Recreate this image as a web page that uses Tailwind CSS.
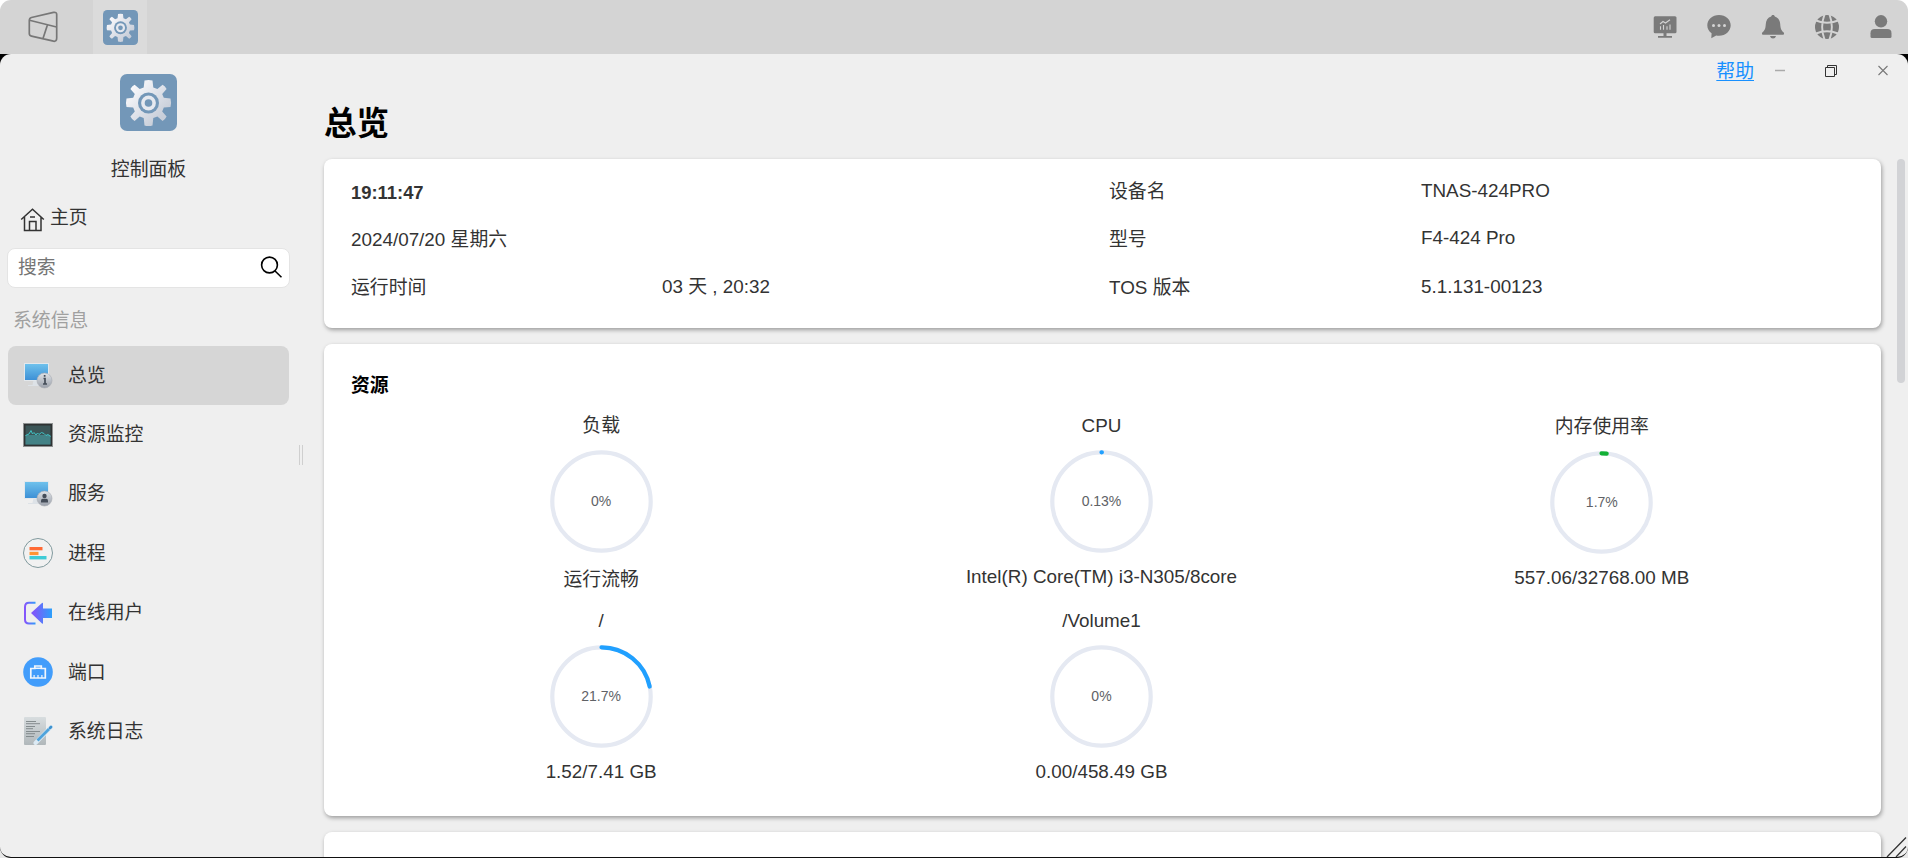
<!DOCTYPE html>
<html lang="zh-CN">
<head>
  <meta charset="UTF-8" />
  <script src="https://cdn.jsdelivr.net/npm/@tailwindcss/browser@4"></script>
  <title>控制面板</title>
</head>
<body class="bg-white h-screen overflow-hidden font-['Liberation_Sans','Noto_Sans_CJK_SC',sans-serif] text-[18.85px] text-[#333]">
  <svg class="absolute h-0 w-0">
    <defs>
      <linearGradient id="gearFill" x1="0" y1="0" x2="1" y2="1">
        <stop offset="0.15" stop-color="#f8f8fb" /><stop offset="0.8" stop-color="#c8ced9" />
      </linearGradient>
      <linearGradient id="screenFill" x1="0" y1="0" x2="0" y2="1">
        <stop offset="0" stop-color="#6ec1ec" /><stop offset="1" stop-color="#3d90d6" />
      </linearGradient>
      <linearGradient id="badgeFill" x1="0" y1="0" x2="0" y2="1">
        <stop offset="0" stop-color="#dfe3e8" /><stop offset="1" stop-color="#9aa0aa" />
      </linearGradient>
      <linearGradient id="purpleFill" gradientUnits="userSpaceOnUse" x1="1" y1="0" x2="29" y2="0">
        <stop offset="0" stop-color="#8c50fb" /><stop offset="0.4" stop-color="#7a5cfa" /><stop offset="1" stop-color="#2ba0fb" />
      </linearGradient>
      <linearGradient id="purpleLine" gradientUnits="userSpaceOnUse" x1="1" y1="0" x2="13" y2="0">
        <stop offset="0" stop-color="#8c50fb" /><stop offset="1" stop-color="#2ba0fb" />
      </linearGradient>
      <linearGradient id="paperFill" x1="0" y1="0" x2="0" y2="1">
        <stop offset="0" stop-color="#d8dddf" /><stop offset="1" stop-color="#b0b7ba" />
      </linearGradient>
      <symbol id="gear" viewBox="0 0 57 57">
        <rect width="57" height="57" rx="7" fill="#7397b8" />
        <path fill="url(#gearFill)" d="M24.5 6.5Q28.5 5.6 32.5 6.5L33.3 13.5L37.4 15L42.6 10.8Q45.2 12.2 46.6 15L42.2 20L43.8 23.8L50.5 24.5Q51.6 28.5 50.5 33L43.8 33.4L42.2 37.4L46.6 42.6Q45.2 45.6 42.6 47L37.4 42.4L33.3 44L32.5 51.5Q28.5 52.5 24.5 51.5L23.7 44L19.7 42.4L14.6 47Q11.8 45.6 10.4 42.6L14.8 37.4L13.2 33.4L6.5 33Q5.5 28.5 6.5 24.5L13.2 23.8L14.8 20L10.4 15Q11.8 12.2 14.6 10.8L19.7 15L23.7 13.5Z" />
        <circle cx="28.5" cy="29" r="10.5" fill="#7397b8" />
        <circle cx="28.5" cy="29" r="7.4" fill="#e6e9f0" />
        <circle cx="28.5" cy="29" r="3.8" fill="#7397b8" />
      </symbol>
      <symbol id="monitor" viewBox="0 0 30 26">
        <path d="M10.5 17h6l1.500 5h3v1H5v-1h4.500z" fill="#dde2e7" />
        <rect x="1" y="0" width="25" height="18" fill="#e3e8ec" />
        <rect x="2" y="1" width="23" height="16" fill="url(#screenFill)" />
        <circle cx="21.500" cy="17.500" r="7.500" fill="url(#badgeFill)" stroke="#a7abb1" stroke-width="0.6" />
      </symbol>
    </defs>
  </svg>

  <div class="flex h-full flex-col">
    <!-- Taskbar -->
    <header class="flex h-[54px] shrink-0 items-center justify-between rounded-t-[11px] bg-[#d4d4d4]">
      <div class="flex h-full items-center">
        <div class="flex h-full w-[93px] items-center">
          <svg class="ml-[27px] h-8 w-8" viewBox="0 0 32 32" fill="none" stroke="#777" stroke-width="1.7" stroke-linejoin="round">
            <path d="M4.500 6.500 26.500 1.400Q29.700.8 29.700 3.500V27Q29.700 30.800 26.500 30.200L4.500 25.200Q2.300 24.700 2.300 22.500V9.500Q2.300 7 4.500 6.500ZM2.500 9.300 29.500 16M20.500 13.800 16 27.600" />
          </svg>
        </div>
        <div class="flex h-full w-[54px] items-center justify-center bg-[#dbdbdb]">
          <svg class="h-[35px] w-[35px]"><use href="#gear" /></svg>
        </div>
      </div>
      <div class="mr-[15px] flex items-center gap-[30px] text-[#7a7a7a]">
        <svg class="h-6 w-6" viewBox="0 0 24 24" fill="currentColor">
          <rect x="0.700" y="1.200" width="22.800" height="17" rx="1.500" />
          <path d="M10.500 18h3v3h5.500v1.700H5V21h5.500z" />
          <path d="M7.500 14.700v-3.500M10.500 14.700V10M14 14.700v-3.500M17 14.700V9.500M7 9l3-2.500 2.500 1.500L17 4.800" fill="none" stroke="#d4d4d4" stroke-width="1.100" />
        </svg>
        <svg class="h-6 w-6" viewBox="0 0 24 24">
          <path fill="currentColor" d="M12 0C5.400 0 .3 4.600.3 10.300c0 3.300 1.600 6.100 4.300 8L4.300 23.200l4.900-2.700c.9.200 1.800.3 2.800.3 6.600 0 11.700-4.700 11.700-10.500S18.600 0 12 0Z" />
          <g fill="#d4d4d4"><circle cx="6.500" cy="10.500" r="1.500" /><circle cx="12" cy="10.500" r="1.500" /><circle cx="17.500" cy="10.500" r="1.500" /></g>
        </svg>
        <svg class="h-6 w-6" viewBox="0 0 24 24" fill="currentColor">
          <path d="M12 0c1.100 0 1.700.6 1.800 1.500 3.500 1 5.200 4 5.400 7.500.3 4.500 1 6.500 3.500 8.500.8.900.2 2.200-1 2.200H2.300c-1.200 0-1.800-1.300-1-2.200 2.500-2 3.200-4 3.500-8.500.2-3.500 1.900-6.500 5.400-7.500C10.300.6 10.900 0 12 0ZM9 21h6c-.5 1.700-1.500 2.500-3 2.500S9.500 22.700 9 21Z" />
        </svg>
        <svg class="h-6 w-6" viewBox="0 0 24 24">
          <circle cx="12" cy="12" r="12" fill="currentColor" />
          <path fill="none" stroke="#d4d4d4" stroke-width="1.900" d="M1 5.500Q12 10 23 5.500M1 18.500Q12 14 23 18.500M9.500-.5Q4.800 12 9.500 24.500M14.500-.5Q19.200 12 14.500 24.500" />
        </svg>
        <svg class="h-6 w-6" viewBox="0 0 24 24" fill="currentColor">
          <circle cx="12" cy="6.300" r="6.200" />
          <path d="M1.500 21.500v-3.300Q1.500 14 5.700 14h12.600q4.200 0 4.200 4.200v3.300q0 1.500-1.500 1.500H3q-1.500 0-1.500-1.500Z" />
        </svg>
      </div>
    </header>

    <!-- Control panel window -->
    <div class="min-h-0 grow bg-linear-to-b from-black from-50% to-[#e8e8e8] to-50%">
      <div class="relative flex h-[804px] overflow-hidden rounded-[11px] border-b border-[#111] bg-[#efefef]">
        <aside class="w-[297px] shrink-0 px-2">
          <div class="flex flex-col items-center pt-5">
            <svg class="h-[57px] w-[57px]"><use href="#gear" /></svg>
            <div class="mt-[25px] leading-7">控制面板</div>
          </div>

          <div class="mt-5 flex h-7 items-center pl-3">
            <svg class="mt-1 h-6 w-[25px]" viewBox="0 0 25 24" fill="none" stroke="#333" stroke-width="1.500">
              <path d="M1.200 11.500 12.500 1.300 23.800 11.500M4.500 9v13.500h16.500V9M9.500 22.500V13.500h6.500v9M10 9h5" />
            </svg>
            <span class="ml-[5px]">主页</span>
          </div>

          <div class="mt-[16px] -ml-px flex h-[40px] w-[283px] items-center justify-between rounded-[8px] border border-[#e4e4e4] bg-white pr-[7px] pl-[10px]">
            <span class="text-[#757575]">搜索</span>
            <svg class="-mt-[2px] h-[22px] w-[22px]" viewBox="0 0 22 22" fill="none" stroke="#000" stroke-width="1.600">
              <circle cx="9.500" cy="9" r="7.900" /><path d="M14.800 14.700 21.500 21.300" />
            </svg>
          </div>

          <div class="mt-[19px] pl-[5px] leading-7 text-[#a0a0a0]">系统信息</div>

          <nav class="mt-[11px] w-[281px]">
            <a class="flex h-[59px] items-center rounded-[8px] bg-[#d6d6d6] pl-[15px]">
              <svg class="mr-4 h-[26px] w-[30px]"><use href="#monitor" /><path d="M20.500 15.500h1.500v5.500M20 21h4M20.800 12.800h1.700" fill="none" stroke="#444c58" stroke-width="1.700" /></svg>
              <span class="-ml-px pt-[2px]">总览</span>
            </a>
            <a class="flex h-[59.3px] items-center pl-[15px]">
              <svg class="mr-4 h-[24px] w-[30px]" viewBox="0 0 30 24">
                <rect width="30" height="24" fill="#8e9292" /><rect x="1" y="1" width="28" height="22" fill="#2f3233" />
                <rect x="2.500" y="2.500" width="25" height="19" fill="#3b5557" /><rect x="2.500" y="12" width="25" height="9.500" fill="#438286" />
                <path d="M2.500 12.500 6 11 8 7.500 9.500 11 11 9.500 13 12 14.500 10 16 11.500 18.500 9.500 21 10.500 23 12.500 25 11.500 27.500 13.500" fill="none" stroke="#3fc3c6" />
              </svg>
              <span class="-ml-px pt-px">资源监控</span>
            </a>
            <a class="flex h-[59.3px] items-center pl-[15px]">
              <svg class="mr-4 h-[26px] w-[30px]"><use href="#monitor" /><circle cx="21.500" cy="15" r="2.200" fill="#444c58" /><path d="M18 21.500v-2q0-1.700 1.700-1.700h3.600q1.700 0 1.700 1.700v2z" fill="#444c58" /></svg>
              <span class="-ml-px pt-px">服务</span>
            </a>
            <a class="flex h-[59.3px] items-center pl-[15px]">
              <svg class="mr-4 h-[30px] w-[30px]" viewBox="0 0 30 30">
                <circle cx="15" cy="15" r="14.500" fill="#f1f1f1" stroke="#80999d" />
                <path d="M6.500 9h13v3.300h-13z" fill="#ff6a35" /><path d="M6.500 13.800h9v3.300h-9z" fill="#ff9432" /><path d="M6.500 18h17v3.400h-17z" fill="#3fcbd6" />
              </svg>
              <span class="-ml-px pt-[2px]">进程</span>
            </a>
            <a class="flex h-[59.3px] items-center pl-[15px]">
              <svg class="mr-4 h-[24px] w-[30px]" viewBox="0 0 30 24">
                <path d="M12.500 1.800H6Q2 1.800 2 6V18.500Q2 22.500 6 22.500H12.500" fill="none" stroke="url(#purpleLine)" stroke-width="2" />
                <path d="M8 12 19 2Q20 1.300 20 2.500V7.500H29V17H20V22Q20 23.200 19 22.500Z" fill="url(#purpleFill)" />
              </svg>
              <span class="-ml-px pt-[2px]">在线用户</span>
            </a>
            <a class="flex h-[59.3px] items-center pl-[15px]">
              <svg class="mr-4 h-[30px] w-[30px]" viewBox="0 0 30 30">
                <circle cx="15" cy="15" r="14.800" fill="#429dfb" />
                <path d="M7.800 11.500h4v-2.500h6.500v2.500h4v9.500H7.800z" fill="none" stroke="#f1f6fc" stroke-width="1.700" />
                <path d="M11 10.500h8V12h-8zM10.500 18h1.200v3h-1.200zM14.400 18h1.200v3h-1.200zM18.300 18h1.200v3h-1.200z" fill="#f1f6fc" />
              </svg>
              <span class="-ml-px pt-[2px]">端口</span>
            </a>
            <a class="flex h-[59.3px] items-center pl-[15px]">
              <svg class="mr-4 h-[28px] w-[30px]" viewBox="0 0 30 28">
                <rect x="1" width="22" height="28" rx="1" fill="url(#paperFill)" />
                <path d="M3 4.500h10M3 6.700h14M3 9.500h9M3 11.700h7M3 14.500h14M3 16.700h9M3 19.500h8" stroke="#7d8487" stroke-width="0.900" />
                <path d="M12.500 26 28 10" stroke="#dceaf4" stroke-width="4" stroke-linecap="round" />
                <path d="M14.500 23.500 26 12" stroke="#4fa3db" stroke-width="2.800" /><path d="M27 11 28 10" stroke="#3f93d0" stroke-width="2.800" stroke-linecap="round" />
              </svg>
              <span class="-ml-px pt-[2px]">系统日志</span>
            </a>
          </nav>
        </aside>

        <!-- Splitter -->
        <div class="mt-[391px] ml-[2px] h-5 w-1 shrink-0 border-x border-[#cfcfcf]"></div>

        <main class="min-w-0 grow pl-[21px]">
          <div class="flex h-[33px] items-center justify-end pr-[19px]">
            <a class="pt-[3px] text-[#1890ff] underline underline-offset-2">帮助</a>
            <svg class="ml-5 h-3 w-3" viewBox="0 0 12 12"><path d="M1 5.500h10" stroke="#aaa" stroke-width="1.500" /></svg>
            <svg class="ml-[39px] h-3 w-3" viewBox="0 0 12 12" fill="none" stroke="#333"><path d="M.5 2.500h9v9h-9zM2.500 2.500v-2h9v9h-2" /></svg>
            <svg class="ml-10 h-3 w-3" viewBox="0 0 12 12"><path d="M1.500 1l9 9M10.500 1l-9 9" stroke="#777" stroke-width="1.100" /></svg>
          </div>
          <h1 class="mt-[12px] h-[60px] text-[32.500px] leading-[50px] font-bold text-black">总览</h1>

          <div class="flex">
            <div class="flex w-[1557px] shrink-0 flex-col gap-4">
              <!-- Device info -->
              <section class="grid h-[169px] grid-cols-[311px_447px_312px_1fr] content-start rounded-lg bg-white pt-[10px] pl-[27px] leading-[47.400px] shadow-[1px_2px_4px_rgba(0,0,0,0.35)]">
                <div class="text-[18.400px] font-bold">19:11:47</div>
                <div></div>
                <div class="-mt-px">设备名</div>
                <div class="-mt-[2px]">TNAS-424PRO</div>
                <div>2024/07/20 星期六</div>
                <div></div>
                <div>型号</div>
                <div class="-mt-[2px]">F4-424 Pro</div>
                <div>运行时间</div>
                <div class="-mt-px">03 天 , 20:32</div>
                <div>TOS 版本</div>
                <div class="-mt-px">5.1.131-00123</div>
              </section>

              <!-- Resources -->
              <section class="h-[472px] rounded-lg bg-white pt-[28px] pr-[29px] pl-[27px] shadow-[1px_2px_4px_rgba(0,0,0,0.35)]">
                <h2 class="leading-7 font-bold text-black">资源</h2>
                <div id="gauges" class="mt-[12px] grid auto-rows-[195px] grid-cols-3"></div>
              </section>

              <section class="h-[60px] shrink-0 rounded-lg bg-white shadow-[1px_2px_4px_rgba(0,0,0,0.35)]"></section>
            </div>
            <div class="ml-4 h-[224px] w-2 rounded-full bg-[#d2d3d6]"></div>
          </div>
        </main>

        <!-- Resize handle -->
        <svg class="absolute right-0 bottom-0 h-[21px] w-[22px]" viewBox="0 0 22 21" fill="none" stroke="#333" stroke-width="1.300">
          <path d="M1 21 20 1.500M10 21 20 10.500" />
        </svg>
      </div>
    </div>
  </div>

  <script>
    const gauges = [
      { name: "负载", percent: 0, note: "运行流畅", color: "#20a0ff", top: "pt-0", gap: "mt-[13px]" },
      { name: "CPU", percent: 0.13, note: "Intel(R) Core(TM) i3-N305/8core", color: "#20a0ff", top: "pt-0", gap: "mt-[10px]" },
      { name: "内存使用率", percent: 1.7, note: "557.06/32768.00 MB", color: "#13b035", top: "pt-px", gap: "mt-[10px]" },
      { name: "/", percent: 21.7, note: "1.52/7.41 GB", color: "#20a0ff", top: "pt-0", gap: "mt-[10px]" },
      { name: "/Volume1", percent: 0, note: "0.00/458.49 GB", color: "#20a0ff", top: "pt-0", gap: "mt-[10px]" },
    ];
    const length = 2 * Math.PI * 49.2;

    document.getElementById("gauges").innerHTML = gauges.map((g) => `
      <div class="flex flex-col items-center ${g.top}">
        <div class="leading-7">${g.name}</div>
        <div class="relative mt-[10px] h-[103px] w-[103px]">
          <svg class="h-full w-full -rotate-90" viewBox="0 0 103 103" fill="none" stroke-width="4.200">
            <circle cx="51.5" cy="51.5" r="49.2" stroke="#e5e9f2" />
            ${g.percent ? `<circle cx="51.5" cy="51.5" r="49.2" stroke="${g.color}" stroke-linecap="round" stroke-dasharray="${length * g.percent / 100} ${length}" />` : ""}
          </svg>
          <span class="absolute inset-0 flex items-center justify-center text-[14px] text-[#606266]">${g.percent}%</span>
        </div>
        <div class="${g.gap} leading-7">${g.note}</div>
      </div>`).join("");
  </script>
</body>
</html>
